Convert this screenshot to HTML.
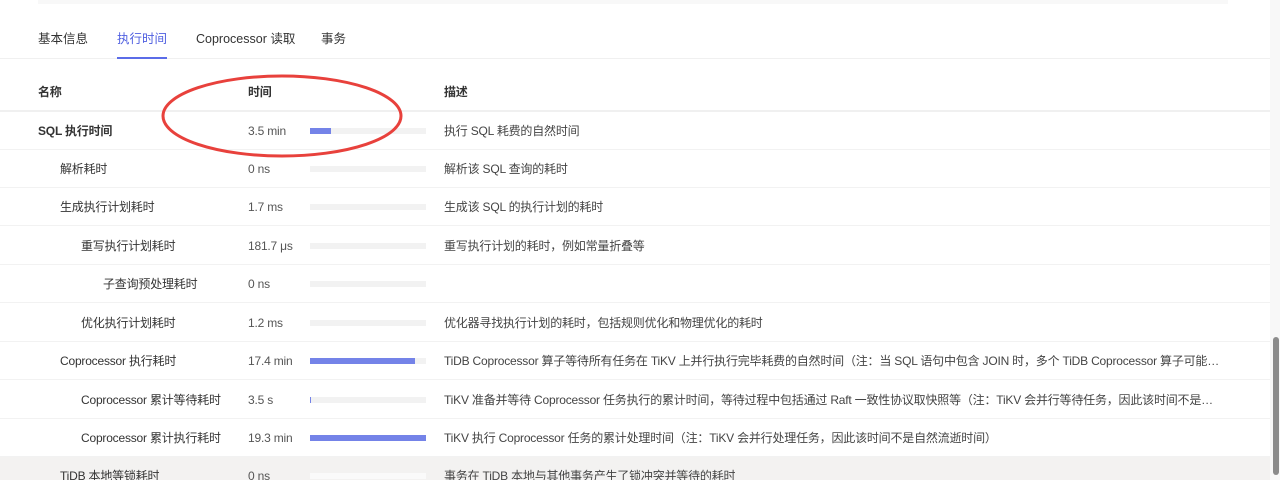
<!DOCTYPE html>
<html><head><meta charset="utf-8"><style>
*{margin:0;padding:0;box-sizing:border-box}
html,body{width:1280px;height:480px;overflow:hidden}
body{background:#fff;font-family:"Liberation Sans","Noto Sans CJK SC",sans-serif;font-size:12px;color:#333;position:relative}
.topbox{position:absolute;left:38px;top:0;width:1190px;height:4px;background:#f8f8f8}
.tabs{position:absolute;left:0;top:0;width:1270px;height:59px;border-bottom:1px solid #f0f0f0}
.tab{position:absolute;top:29px;height:20px;line-height:20px;font-size:12.5px;color:#333}
.tab.on{color:#4f5fe0}
.ul{position:absolute;left:117px;top:57px;width:50px;height:2px;background:#5b6ce8}
.row{position:absolute;left:0;width:1270px;height:38px;border-bottom:1px solid #f2f2f2}
.row span{position:absolute;top:1px;height:37px;line-height:37px;white-space:nowrap;letter-spacing:-0.2px}
.hd{top:73px;height:39px;border-bottom:2px solid #f0f0f0;font-weight:bold}
.bar{position:absolute;left:310px;top:16px;width:116px;height:6px;background:#f2f2f2}
.bar i{position:absolute;left:0;top:0;height:6px;background:#7483e8}
.t{left:248px;color:#555}
.d{left:444px;color:#444;max-width:776px;overflow:hidden;text-overflow:ellipsis}
.sb{position:absolute;left:1270px;top:0;width:10px;height:480px;background:#f8f8f8}
.th{position:absolute;left:1273px;top:337px;width:6px;height:138px;background:#8c8c8c;border-radius:3px}
</style></head><body>
<div class="topbox"></div>
<div class="tabs">
<span class="tab" style="left:38px">基本信息</span>
<span class="tab on" style="left:117px">执行时间</span>
<span class="tab" style="left:196px">Coprocessor 读取</span>
<span class="tab" style="left:321px">事务</span>
<div class="ul"></div>
</div>
<div class="row hd"><span style="left:38px">名称</span><span style="left:248px">时间</span><span style="left:444px">描述</span></div>

<div class="row" style="top:112px"><span style="left:38px;font-weight:bold">SQL 执行时间</span><span class="t">3.5 min</span><div class="bar"><i style="width:21px"></i></div><span class="d">执行 SQL 耗费的自然时间</span></div>
<div class="row" style="top:150px"><span style="left:60px">解析耗时</span><span class="t">0 ns</span><div class="bar"></div><span class="d">解析该 SQL 查询的耗时</span></div>
<div class="row" style="top:188px"><span style="left:60px">生成执行计划耗时</span><span class="t">1.7 ms</span><div class="bar"></div><span class="d">生成该 SQL 的执行计划的耗时</span></div>
<div class="row" style="top:227px"><span style="left:81px">重写执行计划耗时</span><span class="t">181.7 μs</span><div class="bar"></div><span class="d">重写执行计划的耗时，例如常量折叠等</span></div>
<div class="row" style="top:265px"><span style="left:103px">子查询预处理耗时</span><span class="t">0 ns</span><div class="bar"></div></div>
<div class="row" style="top:304px"><span style="left:81px">优化执行计划耗时</span><span class="t">1.2 ms</span><div class="bar"></div><span class="d">优化器寻找执行计划的耗时，包括规则优化和物理优化的耗时</span></div>
<div class="row" style="top:342px"><span style="left:60px">Coprocessor 执行耗时</span><span class="t">17.4 min</span><div class="bar"><i style="width:105px"></i></div><span class="d">TiDB Coprocessor 算子等待所有任务在 TiKV 上并行执行完毕耗费的自然时间（注：当 SQL 语句中包含 JOIN 时，多个 TiDB Coprocessor 算子可能会并行执行</span></div>
<div class="row" style="top:381px"><span style="left:81px">Coprocessor 累计等待耗时</span><span class="t">3.5 s</span><div class="bar"><i style="width:1px"></i></div><span class="d">TiKV 准备并等待 Coprocessor 任务执行的累计时间，等待过程中包括通过 Raft 一致性协议取快照等（注：TiKV 会并行等待任务，因此该时间不是自然流逝时间）</span></div>
<div class="row" style="top:419px"><span style="left:81px">Coprocessor 累计执行耗时</span><span class="t">19.3 min</span><div class="bar"><i style="width:116px"></i></div><span class="d">TiKV 执行 Coprocessor 任务的累计处理时间（注：TiKV 会并行处理任务，因此该时间不是自然流逝时间）</span></div>
<div class="row" style="top:457px;background:#f3f2f1;border:none"><span style="left:60px">TiDB 本地等锁耗时</span><span class="t">0 ns</span><div class="bar" style="background:#fafafa"></div><span class="d">事务在 TiDB 本地与其他事务产生了锁冲突并等待的耗时</span></div>

<svg style="position:absolute;left:0;top:0" width="1280" height="480"><ellipse cx="282" cy="116" rx="119" ry="40" fill="none" stroke="#e8413c" stroke-width="3"/></svg>
<div class="sb"></div><div class="th"></div>
</body></html>
